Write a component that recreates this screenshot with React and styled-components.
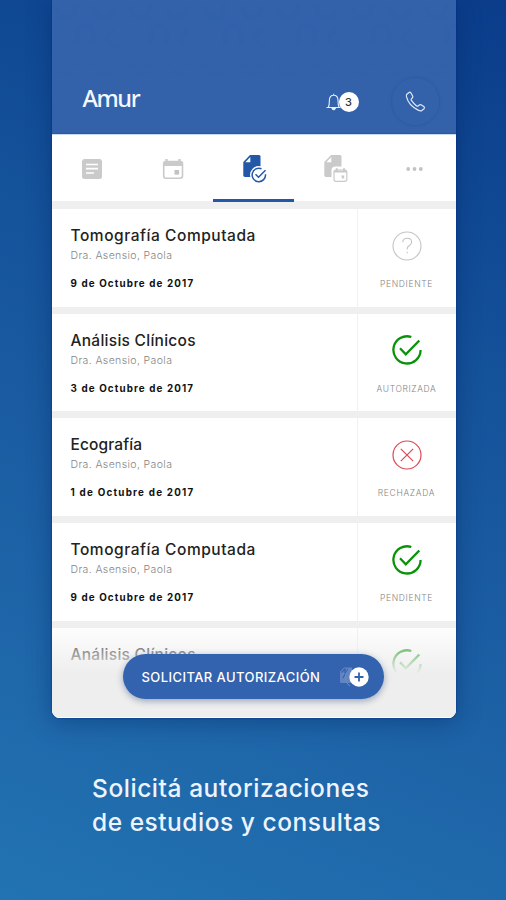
import React from "react";
import styled, { createGlobalStyle } from "styled-components";

const Global = createGlobalStyle`
  * { box-sizing: border-box; }
  body { margin: 0; font-family: Inter, "Open Sans", sans-serif; }
`;

const Page = styled.main`
  width: 506px;
  height: 900px;
  overflow: hidden;
  background: linear-gradient(22deg, #2273b2 0%, #1b5da2 42%, #14529a 65%, #0a3c8a 100%);
`;

const Phone = styled.section`
  position: relative;
  width: 404px;
  height: 718px;
  margin-left: 51.5px;
  overflow: hidden;
  display: flex;
  flex-direction: column;
  background: #efefef;
  border-radius: 0 0 8px 8px;
`;

const PhoneShadow = styled.div`
  width: 506px;
  height: 718px;
  & > section { box-shadow: 0 4px 24px rgba(3, 35, 95, 0.42), 0 0 2px #00279b; }
`;

const Header = styled.header`
  position: relative;
  flex: none;
  height: 134px;
  display: flex;
  align-items: flex-end;
  padding: 0 16px 8px 31px;
  background: #3362ab;
  border-bottom: 1px solid #1f5bb0;
`;

const PatternLayer = styled.svg`
  position: absolute;
  inset: 0;
`;

const Name = styled.h1`
  flex: 1;
  margin: 0 0 10px;
  font: 500 23.5px/34px "Noto Sans", "Open Sans", sans-serif;
  letter-spacing: -1.4px;
  color: #f4f8ff;
`;

const Alerts = styled.div`
  display: flex;
  align-items: center;
  margin: 0 32px 13px 0;
`;

const Count = styled.span`
  width: 20px;
  height: 20px;
  margin-left: -4px;
  border-radius: 50%;
  background: #fff;
  color: #333;
  font-size: 11px;
  font-weight: 500;
  line-height: 20px;
  text-align: center;
`;

const CallButton = styled.div`
  width: 49px;
  height: 49px;
  margin-bottom: -1px;
  border-radius: 50%;
  display: grid;
  place-items: center;
  border: 1px solid rgba(24, 66, 140, 0.2);
  box-shadow: 0 0 3px rgba(24, 66, 140, 0.16);
`;

const Tabs = styled.nav`
  flex: none;
  height: 67px;
  display: grid;
  grid-template-columns: repeat(5, 1fr);
  background: #fff;
  border-top: 1px solid #cbd9ee;
  margin-bottom: 8px;
  & > * { height: 67px; }
`;

const Tab = styled.div`
  display: grid;
  place-items: center;
  padding: ${(p) => (p.$wide ? "4px 0 0 3px" : "4px 0 0")};
  border-bottom: 3px solid ${(p) => (p.$active ? "#2456a6" : "transparent")};
`;

const Row = styled.article`
  flex: none;
  height: 97.7px;
  margin-bottom: 7px;
  display: grid;
  grid-template-columns: 306px 1fr;
  background: #fff;
`;

const Info = styled.div`
  padding: 17px 0 0 19px;
  border-right: 1px solid #f1f1f1;
  white-space: nowrap;
`;

const Title = styled.h2`
  margin: 0;
  font-size: 15.5px;
  font-weight: 500;
  line-height: 20px;
  letter-spacing: ${(p) => p.$track}px;
  color: #222;
`;

const Doctor = styled.p`
  margin: 1px 0 0;
  font-size: 10.5px;
  font-weight: 300;
  line-height: 18px;
  letter-spacing: 0.38px;
  color: #858585;
`;

const DateText = styled.p`
  margin: 10px 0 0;
  font-size: 9.8px;
  font-weight: 700;
  line-height: 18px;
  letter-spacing: ${(p) => p.$track}px;
  color: #111;
`;

const Status = styled.div`
  display: flex;
  flex-direction: column;
  align-items: center;
  padding-top: 20.5px;
`;

const StatusLabel = styled.span`
  margin-top: 16.500px;
  font-size: 8.5px;
  font-weight: 300;
  line-height: 12px;
  letter-spacing: ${(p) => p.$track}px;
  color: #858585;
`;

const Fade = styled.div`
  position: absolute;
  left: 0;
  right: 0;
  bottom: 0;
  height: 96px;
  background: linear-gradient(rgba(238, 238, 238, 0), rgba(238, 238, 238, 0.6) 34%, #eee 54%);
  border-bottom: 1px solid #fff;
`;

const ActionButton = styled.button`
  position: absolute;
  left: 71.5px;
  bottom: 19px;
  width: 261px;
  height: 45px;
  display: flex;
  align-items: center;
  justify-content: space-between;
  padding: 0 14px 0 18.5px;
  border: 0;
  border-radius: 23px;
  background: #3362ae;
  box-shadow: 0 2px 7px rgba(20, 50, 100, 0.4);
  color: #fff;
  font: 500 13px/20px Inter, sans-serif;
  letter-spacing: 0.43px;
  white-space: nowrap;
`;

const Caption = styled.p`
  margin: 53px 0 0 92px;
  color: #eef4ff;
  font-size: 24.5px;
  font-weight: 500;
  line-height: 34px;
  white-space: nowrap;
`;

const CaptionLine = styled.span`
  display: block;
  letter-spacing: ${(p) => p.$track}px;
`;

const HeaderPattern = () => (
  <PatternLayer width="404" height="80">
    <defs>
      <pattern id="marks" width="74" height="56" patternUnits="userSpaceOnUse">
        <g fill="none" stroke="#2454a0" strokeWidth="5" opacity="0.11">
          <path d="M5 6q0 12 10 12q9 0 9-14M42 5q0 13 10 13q9 0 9-12" />
          <path d="M25 45V34q0-8 8-8t8 8v11M62 30q-8 4-6 11q4 6 11 3" />
        </g>
      </pattern>
      <linearGradient id="fade" x2="0" y2="1">
        <stop offset="0.2" stopColor="#fff" />
        <stop offset="1" stopColor="#000" />
      </linearGradient>
      <mask id="fadeMask"><rect width="404" height="80" fill="url(#fade)" /></mask>
    </defs>
    <rect width="404" height="80" fill="url(#marks)" mask="url(#fadeMask)" />
  </PatternLayer>
);

const BellIcon = () => (
  <svg width="18" height="20" viewBox="0 0 18 20" fill="none" stroke="#e7effb" strokeWidth="1.1">
    <path d="M1.5 15.5h14M3.4 15.3q1-2 1-7q0-5 4.3-5t4.3 5q0 5 1 7M8.7 3.2V1.7" />
    <path d="M7 16.2q1.7 3.2 3.4 0z" fill="#fff" />
  </svg>
);

const PhoneIcon = () => (
  <svg width="21" height="21" viewBox="0 0 22 22" fill="none" stroke="#dce7f8" strokeWidth="1.3" strokeLinejoin="round">
    <path d="M4.2 1.6L1.9 3.4Q1.2 4 1.6 6.2Q3.8 15.3 13.8 20q2.5 1.1 3.8.5l2.4-2q.8-.9 0-1.9l-3.2-2.2q-1-.5-1.8.2l-1.2 1.1q-.8.5-1.7-.1Q9 13.2 6.7 9.9q-.6-1 0-1.7l1.1-1.100q.7-.8.2-1.8L6.1 1.9q-.8-1-1.9-.3z" />
  </svg>
);

const NoteIcon = () => (
  <svg width="22" height="22" viewBox="0 0 22 22">
    <rect x="1" y="1" width="20" height="20" rx="2.5" fill="#cacaca" />
    <path d="M5 6.5h12M5 10.7h12M5 15h8" stroke="#fff" strokeWidth="1.7" />
  </svg>
);

const CalendarIcon = () => (
  <svg width="22" height="22" viewBox="0 0 22 22">
    <path d="M4.5 1v3M17.5 1v3" stroke="#cacaca" strokeWidth="2.4" />
    <rect x="1.7" y="3.5" width="18.8" height="16.8" rx="2.2" fill="#fff" stroke="#cacaca" strokeWidth="1.6" />
    <path d="M1.5 4h19v4h-19z" fill="#cacaca" />
    <rect x="12.5" y="12" width="4.6" height="4.6" fill="#c2c2c2" />
  </svg>
);

const PageMark = ({ color }) => (
  <>
    <path d="M8 1h9q1.5 0 1.5 1.500V23H3q-1.700 0-1.700-1.700V8z" fill={color} />
    <path d="M3.300 8.300L8.300 3v5.300z" fill="#fff" />
  </>
);

const PageCheckIcon = () => (
  <svg width="26" height="30" viewBox="0 0 26 30">
    <PageMark color="#2258a7" />
    <circle cx="17" cy="21" r="9" fill="#fff" />
    <path d="M19.500 14.800A6.700 6.700 0 1 0 23.500 20.300" fill="none" stroke="#2258a7" strokeWidth="1.500" />
    <path d="M13.500 20.300l3 3 7-7" fill="none" stroke="#2258a7" strokeWidth="1.500" />
  </svg>
);

const PageCalendarIcon = () => (
  <svg width="26" height="30" viewBox="0 0 26 30">
    <PageMark color="#cacaca" />
    <rect x="8.500" y="12.500" width="17" height="17" rx="4" fill="#fff" />
    <rect x="11" y="16" width="12.800" height="11.300" rx="2" fill="none" stroke="#cacaca" strokeWidth="1.200" />
    <path d="M11 17.500h13M13.800 14.200v3M21 14.200v3" stroke="#cacaca" strokeWidth="2" />
    <path d="M18.200 21.500h3v3h-2z" fill="#cacaca" />
  </svg>
);

const MoreIcon = () => (
  <svg width="20" height="6" viewBox="0 0 20 6" fill="#c3c3c3">
    <circle cx="3.200" cy="3" r="1.900" /><circle cx="9.500" cy="3" r="1.900" /><circle cx="15.800" cy="3" r="1.900" />
  </svg>
);

const StatusIcon = ({ kind }) => (
  <svg width="32" height="32" viewBox="0 0 32 32" fill="none">
    {kind === "ok" && (
      <g stroke="#0a930a" strokeWidth="2.3">
        <path d="M20.300 3A13.600 13.600 0 1 0 29.600 16" />
        <path d="M9 14.300l5.800 6L28.300 6.500" />
      </g>
    )}
    {kind === "no" && (
      <g stroke="#dc4752" strokeWidth="1.2">
        <circle cx="16" cy="16" r="14" />
        <path d="M9.800 9.800l12.400 12.400M22.200 9.800L9.800 22.200" />
      </g>
    )}
    {kind === "wait" && (
      <g stroke="#c4c4c4" strokeWidth="1.1">
        <circle cx="16" cy="16" r="14" />
        <path d="M11.800 12.300q0-4 4.500-4q4.300 0 4.300 3.700q0 2.200-2.200 3.400t-2.200 3.100v1M16.200 21.700v1.600" />
      </g>
    )}
  </svg>
);

const AddPageIcon = () => (
  <svg width="32" height="26" viewBox="0 0 32 26">
    <path d="M6 3.500h8v15.500h-10.500q-1.500 0-1.500-1.500V7.500z" fill="#6185c3" />
    <path d="M3.500 8.500L7 5v4M10 5l-5 9" stroke="#3362ae" strokeWidth="1.2" fill="none" />
    <path d="M12 5a10 10 0 0 0 0 17" stroke="#6b8dc6" fill="none" />
    <circle cx="21" cy="13" r="9.700" fill="#fff" />
    <path d="M21 8.500v9M16.500 13h9" stroke="#3362ae" strokeWidth="1.8" />
  </svg>
);

const studies = [
  { title: "Tomografía Computada", track: 0.55, date: "9 de Octubre de 2017", dt: 1.13, kind: "wait", status: "PENDIENTE", st: 0.65 },
  { title: "Análisis Clínicos", track: 0.27, date: "3 de Octubre de 2017", dt: 1.13, kind: "ok", status: "AUTORIZADA", st: 0.62 },
  { title: "Ecografía", track: 0.12, date: "1 de Octubre de 2017", dt: 1.25, kind: "no", status: "RECHAZADA", st: 0.7 },
  { title: "Tomografía Computada", track: 0.55, date: "9 de Octubre de 2017", dt: 1.13, kind: "ok", status: "PENDIENTE", st: 0.65 },
  { title: "Análisis Clínicos", track: 0.27, kind: "ok" },
];

export default function App() {
  return (
    <Page>
      <Global />
      <PhoneShadow>
        <Phone>
          <Header>
            <HeaderPattern />
            <Name>Amur</Name>
            <Alerts><BellIcon /><Count>3</Count></Alerts>
            <CallButton><PhoneIcon /></CallButton>
          </Header>
          <Tabs>
            <Tab><NoteIcon /></Tab>
            <Tab><CalendarIcon /></Tab>
            <Tab $active $wide><PageCheckIcon /></Tab>
            <Tab $wide><PageCalendarIcon /></Tab>
            <Tab><MoreIcon /></Tab>
          </Tabs>
          {studies.map((s, i) => (
            <Row key={i}>
              <Info>
                <Title $track={s.track}>{s.title}</Title>
                {s.date && <Doctor>Dra. Asensio, Paola</Doctor>}
                {s.date && <DateText $track={s.dt}>{s.date}</DateText>}
              </Info>
              <Status>
                <StatusIcon kind={s.kind} />
                {s.status && <StatusLabel $track={s.st}>{s.status}</StatusLabel>}
              </Status>
            </Row>
          ))}
          <Fade />
          <ActionButton>SOLICITAR AUTORIZACIÓN<AddPageIcon /></ActionButton>
        </Phone>
      </PhoneShadow>
      <Caption>
        <CaptionLine $track={0.55}>Solicitá autorizaciones</CaptionLine>
        <CaptionLine $track={0.52}>de estudios y consultas</CaptionLine>
      </Caption>
    </Page>
  );
}
